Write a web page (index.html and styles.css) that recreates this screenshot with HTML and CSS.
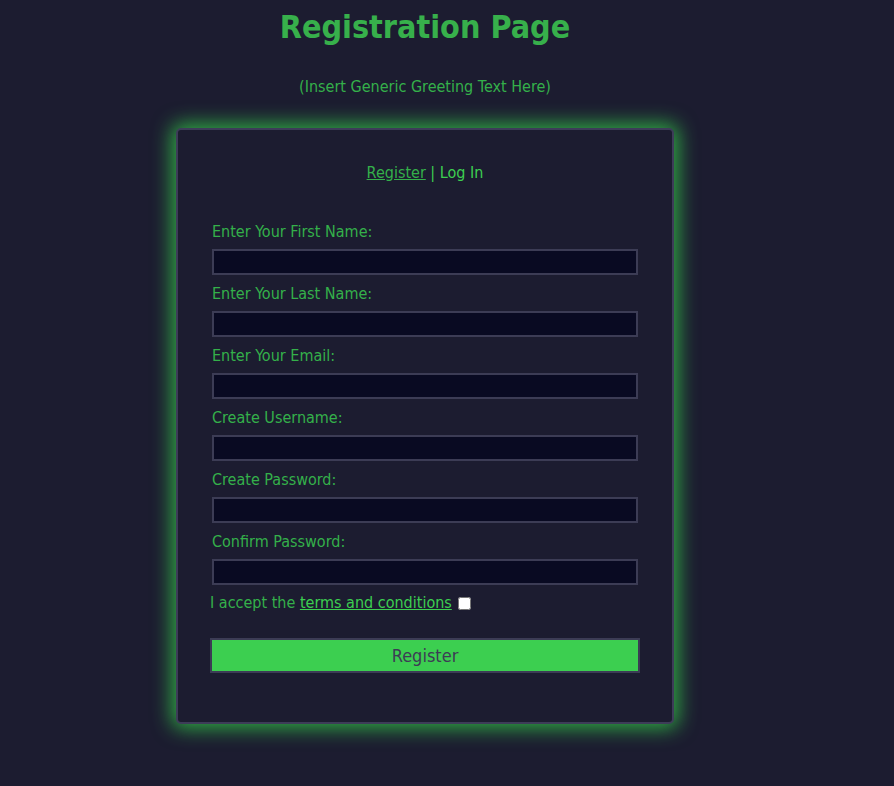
FILE: index.html
```html
<!DOCTYPE html>
<html lang="en">
<head>
<meta charset="utf-8">
<title>Registration Page</title>
<link rel="stylesheet" href="styles.css">
</head>
<body>
<div class="page">
  <h1 class="title">Registration Page</h1>
  <p class="greeting">(Insert Generic Greeting Text Here)</p>
  <div class="card">
    <div class="nav"><a href="#" class="nav-link">Register</a> | Log In</div>
    <form class="form">
      <label class="label">Enter Your First Name:</label>
      <input class="field" type="text">
      <label class="label">Enter Your Last Name:</label>
      <input class="field" type="text">
      <label class="label">Enter Your Email:</label>
      <input class="field" type="text">
      <label class="label">Create Username:</label>
      <input class="field" type="text">
      <label class="label">Create Password:</label>
      <input class="field" type="password">
      <label class="label">Confirm Password:</label>
      <input class="field" type="password">
      <div class="terms">I accept the <a href="#" class="terms-link">terms and conditions</a> <input type="checkbox" class="check"></div>
      <button type="button" class="submit">Register</button>
    </form>
  </div>
</div>
</body>
</html>
```
FILE: styles.css
```css
html, body {
  margin: 0;
  padding: 0;
  background: #1c1c30;
}
body {
  font-family: "DejaVu Sans Condensed", "DejaVu Sans", sans-serif;
  color: #34b04a;
}
.page {
  width: 850px;
  padding-bottom: 40px;
  display: flex;
  flex-direction: column;
  align-items: center;
}
.title {
  margin: 8px 0 0;
  font-size: 32px;
  line-height: 38px;
  font-weight: bold;
  color: #37b04b;
}
.greeting {
  margin: 31px 0 0;
  font-size: 16px;
  line-height: 20px;
}
.card {
  margin-top: 31px;
  width: 430px;
  padding: 33px 32px 49px;
  border: 2px solid #3d3c58;
  border-radius: 5px;
  box-shadow: 0 0 20px 4px rgba(52, 200, 72, 0.85);
  background: #1c1c30;
}
.nav {
  text-align: center;
  font-size: 16px;
  line-height: 20px;
  color: #3ccf50;
}
.nav-link {
  color: #34b04a;
}
.form {
  margin-top: 39px;
  display: flex;
  flex-direction: column;
}
.label {
  margin-left: 2px;
  font-size: 16px;
  line-height: 20px;
}
.field {
  box-sizing: border-box;
  margin: 7px 2px 9px;
  width: 426px;
  height: 26px;
  background: #090a22;
  border: 2px solid #3c3c55;
  padding: 0;
  outline: none;
}
.terms {
  margin-top: -1px;
  font-size: 16px;
  line-height: 20px;
  display: block;
}
.terms-link {
  color: #3ccf50;
}
.check {
  margin: 0 0 0 2px;
  width: 13px;
  height: 13px;
  vertical-align: -2px;
}
.submit {
  margin-top: 25px;
  width: 430px;
  height: 35px;
  background: #3ccf50;
  border: 2px solid #3c3c55;
  color: #3c3c55;
  font-family: "DejaVu Sans Condensed", "DejaVu Sans", sans-serif;
  font-size: 18px;
  padding: 0;
}
```
